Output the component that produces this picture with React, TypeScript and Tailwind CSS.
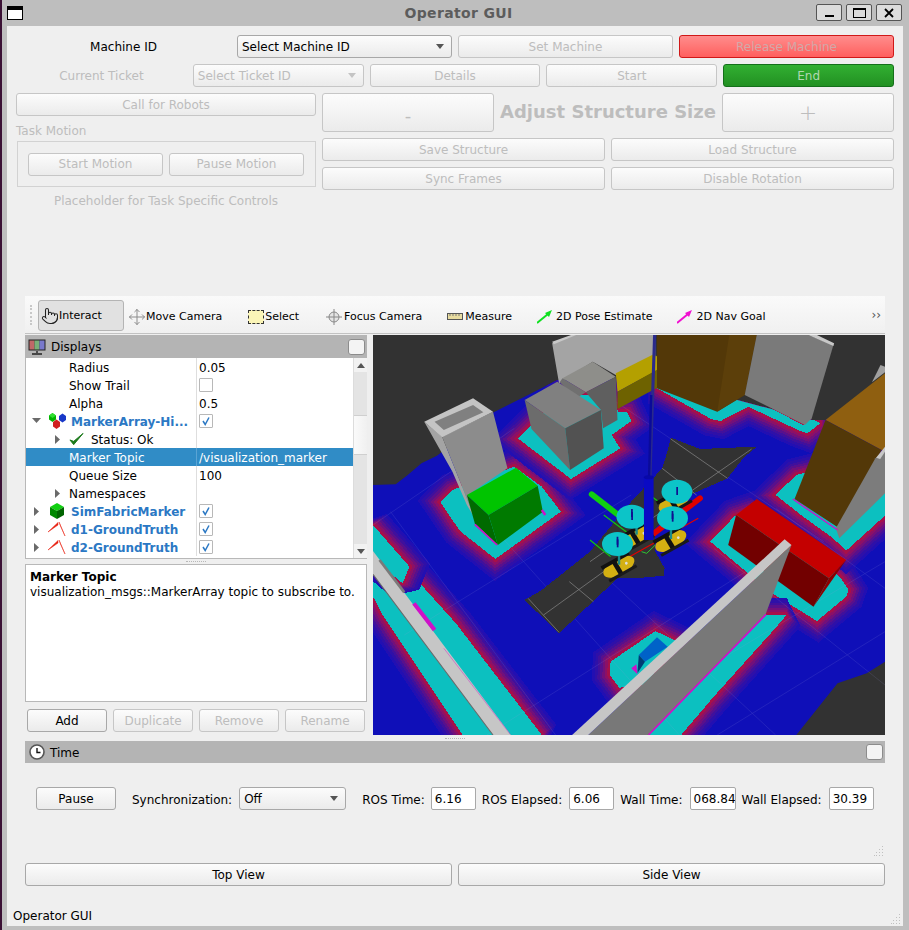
import React from "react";
import { Pointer, Move } from "lucide-react";

function Btn({ children, className = "", on = false }: { children?: React.ReactNode; className?: string; on?: boolean }) {
  return (
    <div className={`h-[23px] flex items-center justify-center rounded-[3px] border bg-gradient-to-b from-[#fcfcfc] to-[#ebebeb] ${on ? "border-[#a8a8a8] text-black" : "border-[#c6c6c6] text-[#bdbdbd]"} ${className}`}>
      {children}
    </div>
  );
}

function Combo({ label, on = false, className = "" }: { label: string; on?: boolean; className?: string }) {
  return (
    <div className={`h-[23px] flex items-center justify-between pl-[4px] pr-[7px] rounded-[3px] border bg-gradient-to-b from-[#fcfcfc] to-[#ebebeb] ${on ? "border-[#a8a8a8] text-black" : "border-[#c6c6c6] text-[#bdbdbd]"} ${className}`}>
      <span>{label}</span>
      <svg width="8" height="5" viewBox="0 0 8 5"><path d="M0 0h8L4 5z" fill={on ? "#555" : "#c4c4c4"} /></svg>
    </div>
  );
}

function Halo({ points, fill = "#0cc0c0" }: { points: string; fill?: string }) {
  const layers: [number, string][] = [
    [104, "#220fb2"],
    [88, "#2e10a8"],
    [72, "#40109c"],
    [58, "#58108c"],
    [44, "#72107a"],
    [30, "#8c1066"],
    [16, "#a6104a"],
  ];
  return (
    <g shapeRendering="crispEdges">
      {layers.map(([w, c]) => (
        <polygon key={w} points={points} fill={c} stroke={c} strokeWidth={w} strokeLinejoin="miter" strokeMiterlimit={1.6} />
      ))}
      <polygon points={points} fill={fill} />
    </g>
  );
}

function Robot({ x, y, disc }: { x: number; y: number; disc: [number, number] }) {
  return (
    <g>
      <g transform={`translate(${x} ${y}) rotate(-30)`}>
        <ellipse cx="0" cy="0" rx="50" ry="25" fill="#d4b012" />
        <rect x="-46" y="-27" width="92" height="11" fill="#111" />
        <rect x="-12" y="-22" width="14" height="46" fill="#111" />
        <rect x="-46" y="19" width="92" height="9" fill="#1a1a1a" />
        <circle cx="24" cy="2" r="4" fill="#ddd" />
      </g>
      <rect x={x - 3} y={y - 40} width="7" height="34" fill="#1a8a8a" />
      <ellipse cx={disc[0]} cy={disc[1]} rx="45" ry="36" fill="#0cc4c8" />
      <rect x={disc[0] - 2} y={disc[1] - 14} width="5" height="24" fill="#101090" />
    </g>
  );
}

function Scene() {
  return (
    <svg width="512" height="400" viewBox="9 120 1489 1200" preserveAspectRatio="none" className="block shrink-0">
      <rect x="9" y="120" width="1489" height="1200" fill="#323232" />
      <clipPath id="floorclip">
        <polygon points="9,570 75,568 110,540 150,505 195,482 360,352 460,300 545,255 835,250 1285,375 1325,375 1498,300 1498,1100 1445,1135 1360,1165 1240,1320 9,1320" />
      </clipPath>
      <g clipPath="url(#floorclip)">
        <rect x="9" y="120" width="1489" height="1200" fill="#0f0fb8" />
        <Halo points="205,622 240,585 420,515 500,575 555,650 365,792 262,708" />
        <Halo points="430,430 465,395 560,300 700,300 722,350 748,350 760,378 703,420 728,460 585,552" />
        <Halo points="835,280 860,265 1010,345 1090,300 1260,390 1285,370 1310,385 1272,415 1245,405 1100,335 1020,378 992,372" />
        <Halo points="990,740 1062,662 1125,640 1300,780 1370,850 1392,885 1385,905 1300,978 1170,895" />
        <Halo points="1180,600 1240,540 1400,500 1498,500 1498,662 1385,767 1345,728 1260,665" />
        <Halo points="9,835 35,880 90,885 150,870 250,985 500,1320 270,1320 40,965 9,905" />
        <Halo points="9,690 115,815 95,865 9,790" />
        <Halo points="700,1100 830,1008 895,1040 800,1170 725,1178 698,1140" />
        <Halo points="1150,960 1212,960 1170,1010 1000,1205 905,1320 810,1320" />
      </g>
      <g fill="none" stroke="#9a9ae0" strokeWidth="1.5" opacity="0.28">
        <path d="M9 690 L420 400 M100 1020 L760 600 M340 1320 L1200 760 M650 1320 L1498 800 M1010 1320 L1498 1010" />
        <path d="M60 650 L540 1320 M360 700 L900 1320 M690 850 L1180 1320 M1000 760 L1498 1170 M1180 640 L1498 880 M700 310 L1320 740" />
      </g>
      <polygon fill="#323232" shapeRendering="crispEdges" points="875,428 960,462 1125,455 1085,490 1040,550 930,600 880,640 830,700 830,770 857,820 855,842 770,850 720,850 550,1015 450,915 500,885 640,770 760,620 850,520 865,470" />
      <g fill="none" stroke="#8a8a8a" strokeWidth="2">
        <path d="M875 432 L1040 550 M1110 462 L640 800 M460 910 L550 1012 M505 960 L720 800 M580 860 L650 920 M850 520 L950 600" />
      </g>

      {/* left tall tower */}
      <polygon fill="#a4a4a4" points="158,380 210,425 305,670 282,630 240,530" />
      <polygon fill="#8c8c8c" points="210,425 358,350 400,520 285,600 305,670" />
      <polygon fill="#c4c4c4" points="158,380 300,310 358,350 210,427" />
      <polygon fill="#808080" points="188,380 300,330 330,352 215,405" />

      {/* top building */}
      <polygon fill="#a4a4a4" points="530,145 590,120 830,120 830,180 715,240 648,200 550,265" />
      <polygon fill="#c8c8c8" points="530,140 585,120 600,120 535,148" />
      {/* yellow */}
      <polygon fill="#b4a000" points="715,235 825,178 860,200 860,212 720,290" />
      <polygon fill="#6e6200" points="720,290 860,210 860,265 720,342" />
      {/* gray boxes */}
      <polygon fill="#8e8e8a" points="560,250 648,200 715,245 628,292" />
      <polygon fill="#5f5f5f" points="628,292 715,245 720,375 678,400 672,345" />
      <polygon fill="#707070" points="560,250 628,292 600,310 552,262" />
      <polygon fill="#808080" points="450,315 545,260 672,345 568,400" />
      <polygon fill="#6c6c6c" points="450,315 568,400 582,525 470,402" />
      <polygon fill="#525252" points="568,400 672,345 680,460 582,525" />

      {/* top right brown + gray */}
      <polygon fill="#533808" points="835,120 1125,120 1090,300 1010,350 835,280" />
      <polygon fill="#5c3f0a" points="1045,120 1125,120 1090,300 1010,350" />
      <polygon fill="#7a7a7a" points="1125,120 1275,120 1348,150 1285,370 1265,390 1090,300" />
      <polygon fill="#c8c8c8" points="1275,120 1300,120 1350,145 1348,153" />

      {/* green box */}
      <polygon fill="#00c400" points="282,600 425,518 488,572 345,660" />
      <polygon fill="#006a00" points="282,600 345,660 372,750 305,685" />
      <polygon fill="#007a00" points="345,660 488,572 503,650 372,750" />
      <path d="M305 688 L370 750" stroke="#d010c8" strokeWidth="5" />
      <path d="M500 645 L510 660" stroke="#d010c8" strokeWidth="7" />

      {/* right brown */}
      <polygon fill="#8f5f10" points="1325,375 1498,235 1498,470 1488,465" />
      <polygon fill="#533808" points="1325,375 1488,465 1365,700 1235,612" />
      <polygon fill="#7c7c7c" points="1470,490 1498,470 1498,595 1365,730 1355,700" />
      <polygon fill="#c8c8c8" points="1472,488 1498,455 1498,470 1484,492" />
      <polygon fill="#a0a0a0" points="1460,262 1485,210 1498,215 1498,232" />
      <path d="M1230 612 L1360 705" stroke="#d010c8" strokeWidth="4" />

      {/* red box */}
      <polygon fill="#c40000" points="1065,660 1125,612 1385,795 1335,850" />
      <polygon fill="#720000" points="1065,660 1335,850 1290,935 1042,750" />
      <polygon fill="#8c0000" points="1335,850 1385,795 1290,935" />

      {/* robots and axes */}
      <path d="M828 120 L814 560" stroke="#2a2a8c" strokeWidth="9" />
      <path d="M818 300 L812 545" stroke="#0a0a9a" strokeWidth="7" />
      <path d="M645 598 L725 662" stroke="#10d010" strokeWidth="17" strokeLinecap="round" />
      <path d="M680 660 L790 745 M640 735 L700 785 M820 605 L860 635" stroke="#10c810" strokeWidth="3.5" />
      <path d="M790 770 L805 775 L830 750" stroke="#30e030" strokeWidth="2.5" fill="none" />
      <path d="M960 610 L820 720" stroke="#e00000" strokeWidth="17" strokeLinecap="round" />
      <path d="M955 670 L755 785" stroke="#e00000" strokeWidth="3.5" />
      <Robot x={885} y={620} disc={[893, 590]} />
      <Robot x={775} y={725} disc={[762, 665]} />
      <Robot x={875} y={738} disc={[880, 670]} />
      <Robot x={724} y={815} disc={[720, 747]} />
      <rect x="797" y="545" width="28" height="190" fill="#0a0ac4" />
      <ellipse cx="811" cy="547" rx="14" ry="6" fill="#0808a8" />
      <path d="M762 642 v24 M880 648 v24 M720 725 v24" stroke="#101090" strokeWidth="5" />

      {/* blue box */}
      <polygon fill="#0062c8" points="782,1080 835,1027 866,1055 800,1100" />
      <polygon fill="#003c74" points="782,1080 800,1100 778,1135" />
      <polygon fill="#d010c8" points="760,1120 775,1108 778,1138" />

      {/* front wall */}
      <polygon fill="#787878" points="635,1320 1226,750 1150,960 810,1320" />
      <polygon fill="#c6c6c6" points="588,1320 1206,733 1226,750 635,1320" />
      <path d="M810 1320 L1152 958" stroke="#d010c8" strokeWidth="5" />

      {/* left wall */}
      <polygon fill="#c6c6c6" points="9,768 410,1320 358,1320 9,838" />
      <path d="M9 838 L358 1320" stroke="#6a6a6a" strokeWidth="3" />
      <path d="M28 795 L100 892" stroke="#7a7a7a" strokeWidth="8" />
      <path d="M128 925 L188 1005" stroke="#d010c8" strokeWidth="12" />
      <path d="M215 1060 L408 1318" stroke="#d010c8" strokeWidth="2" opacity="0.6" />
    </svg>
  );
}

function Arrow({ open }: { open: boolean }) {
  return open ? (
    <svg width="9" height="6" viewBox="0 0 9 6"><path d="M0 0h9L4.5 5z" fill="#6a6a6a" /></svg>
  ) : (
    <svg width="5" height="9" viewBox="0 0 5 9"><path d="M0 0v9l5-4.5z" fill="#6a6a6a" /></svg>
  );
}

function Value({ value, check, sel }: { value?: string; check?: "on" | "off"; sel?: boolean }) {
  return (
    <>
      <div className={`w-px h-full shrink-0 ${sel ? "bg-[#5aa4d4]" : "bg-[#dedede]"}`} />
      <div className="pl-[2px] flex items-center whitespace-nowrap">
        {value && <span className="pt-[2px]">{value}</span>}
        {check && (
          <div className="w-[14px] h-[14px] border border-[#b8b8b8] bg-white rounded-[1px] flex items-center justify-center">
            {check === "on" && (
              <svg width="10" height="10" viewBox="0 0 10 10"><path d="M2 5 L4.2 8.5 L8 1.5" fill="none" stroke="#2b78c4" strokeWidth="1.5" /></svg>
            )}
          </div>
        )}
      </div>
    </>
  );
}

function TopRow({ exp, icon, label, check }: { exp: boolean; icon: React.ReactNode; label: string; check: "on" | "off" }) {
  return (
    <div className="h-[18px] flex items-center">
      <div className="w-[170px] h-full flex items-center shrink-0">
        <div className="w-[20px] flex justify-center shrink-0"><Arrow open={exp} /></div>
        <div className="w-[22px] flex justify-center shrink-0 mr-[3px]">{icon}</div>
        <span className="font-bold text-[#2b78c4] whitespace-nowrap pt-[2px]">{label}</span>
      </div>
      <Value check={check} />
    </div>
  );
}

function SubRow({ label, arrow = false, icon, value, check, sel = false }: { label: string; arrow?: boolean; icon?: React.ReactNode; value?: string; check?: "on" | "off"; sel?: boolean }) {
  return (
    <div className={`h-[18px] flex items-center ${sel ? "bg-[#308cc6] text-white" : ""}`}>
      <div className="w-[170px] h-full flex items-center shrink-0">
        <div className="w-[20px] shrink-0" />
        <div className="w-[23px] flex justify-center shrink-0">{arrow && <Arrow open={false} />}</div>
        {icon && <div className="w-[22px] shrink-0 flex items-center">{icon}</div>}
        <span className="whitespace-nowrap pt-[2px]">{label}</span>
      </div>
      <Value value={value} check={check} sel={sel} />
    </div>
  );
}

const Cubes = () => (
  <svg width="20" height="18" viewBox="0 0 20 18">
    <path d="M2 3.5l3.5-2.5 3.5 2.5v4l-3.5 2.5-3.5-2.5z" fill="#00b400" />
    <path d="M2 3.5l3.5-2.5 3.5 2.5-3.5 2.5z" fill="#30e030" />
    <path d="M12 4l3.5-2.5 3.5 2.5v4l-3.5 2.5-3.5-2.5z" fill="#1838c8" />
    <path d="M6 10l3.5-2.5 3.5 2.5v4.5l-3.5 2.5-3.5-2.5z" fill="#d02020" />
  </svg>
);
const GreenCube = () => (
  <svg width="16" height="16" viewBox="0 0 16 16">
    <path d="M1 4l7-4 7 4-7 4z" fill="#10d010" />
    <path d="M1 4l7 4v8l-7-4z" fill="#008800" />
    <path d="M15 4l-7 4v8l7-4z" fill="#006400" />
  </svg>
);
const RobotIcon = () => (
  <svg width="18" height="16" viewBox="0 0 18 16">
    <path d="M0 11 L10 1.5 L10 4z" fill="#e82010" stroke="#e82010" strokeWidth="0.5" />
    <path d="M11 1 L17 15 L12.5 5z" fill="#e82010" stroke="#e82010" strokeWidth="0.5" />
  </svg>
);
const Check = () => (
  <svg width="15" height="14" viewBox="0 0 16 14"><path d="M1 8 L5 13 L15 1 L5 9.5z" fill="#1c7a1c" stroke="#1c7a1c" strokeWidth="1" /></svg>
);

function ToolItem({ icon, label, className = "" }: { icon: React.ReactNode; label: string; className?: string }) {
  return (
    <div className={`flex items-center shrink-0 pt-[4px] ${className}`}>
      {icon}
      <span className="pt-[1px]">{label}</span>
    </div>
  );
}

function Dots({ className = "" }: { className?: string }) {
  return (
    <svg width="10" height="10" viewBox="0 0 10 10" className={className}>
      <g fill="#c0c0c0">
        <rect x="8" y="0" width="1" height="1" /><rect x="5" y="3" width="1" height="1" /><rect x="8" y="3" width="1" height="1" />
        <rect x="2" y="6" width="1" height="1" /><rect x="5" y="6" width="1" height="1" /><rect x="8" y="6" width="1" height="1" />
        <rect x="0" y="9" width="1" height="1" /><rect x="2" y="9" width="1" height="1" /><rect x="5" y="9" width="1" height="1" /><rect x="8" y="9" width="1" height="1" />
      </g>
    </svg>
  );
}

function NumBox({ v, className = "" }: { v: string; className?: string }) {
  return (
    <div className={`h-[23px] w-[45px] bg-white border border-[#a8a8a8] rounded-[2px] flex items-center pl-[3px] overflow-hidden whitespace-nowrap ${className}`}>{v}</div>
  );
}

export default function App() {
  return (
    <div className="w-[909px] h-[930px] bg-[#bebebe] flex flex-col overflow-hidden text-[12px] border-l-[2px] border-[#3a1034] font-['DejaVu_Sans',sans-serif] text-black">
      {/* title bar */}
      <div className="h-[26px] flex items-center shrink-0">
        <div className="w-[16px] h-[14px] ml-[5px] bg-white border-[1px] border-black border-t-[4px]" />
        <div className="flex-1 text-center font-bold text-[14px] tracking-[0.35px] text-[#5c5c5c] pl-[78px]">Operator GUI</div>
        <div className="flex gap-[4px] mr-[7px] mt-[-1px]">
          <div className="w-[26px] h-[17px] border-[1px] border-[#555] rounded-[2px] bg-[#dcdcdc] flex items-end justify-center pb-[3px]"><div className="w-[9px] h-[2px] bg-black" /></div>
          <div className="w-[26px] h-[17px] border-[1px] border-[#555] rounded-[2px] bg-[#dcdcdc] flex items-center justify-center"><div className="w-[13px] h-[10px] border border-black border-t-[2px]" /></div>
          <div className="w-[26px] h-[17px] border-[1px] border-[#555] rounded-[2px] bg-[#dcdcdc] flex items-center justify-center">
            <svg width="10" height="10" viewBox="0 0 10 10"><path d="M1 1l8 8M9 1l-8 8" stroke="#000" strokeWidth="1.8" /></svg>
          </div>
        </div>
      </div>

      {/* window body */}
      <div className="ml-[5px] w-[896px] h-[900px] bg-[#efefef] flex flex-col shrink-0">
        <div className="h-[270px] shrink-0 px-[9px] pt-[9px] flex flex-col gap-[6px]">
          <div className="grid grid-cols-4 gap-[6px]">
            <div className="h-[23px] flex items-center justify-center">Machine ID</div>
            <Combo label="Select Machine ID" on />
            <Btn>Set Machine</Btn>
            <div className="h-[23px] flex items-center justify-center rounded-[3px] border border-[#d01818] bg-gradient-to-b from-[#ff8c8c] to-[#ff5e5e] text-[#d2a8a8]">Release Machine</div>
          </div>
          <div className="grid grid-cols-5 gap-[6px]">
            <div className="h-[23px] flex items-center justify-center text-[#bdbdbd]">Current Ticket</div>
            <Combo label="Select Ticket ID" />
            <Btn>Details</Btn>
            <Btn>Start</Btn>
            <div className="h-[23px] flex items-center justify-center rounded-[3px] border border-[#14701a] bg-gradient-to-b from-[#32b032] to-[#229022] text-[#b0d8b0]">End</div>
          </div>
          <div className="flex gap-[6px]">
            <div className="w-[300px] flex flex-col shrink-0">
              <Btn>Call for Robots</Btn>
              <div className="h-[25px] flex items-end pb-[1px] text-[#bdbdbd]">Task Motion</div>
              <div className="ml-[1px] h-[46px] border border-[#d2d2d2] flex items-center gap-[6px] pl-[10px]">
                <Btn className="w-[135px]">Start Motion</Btn>
                <Btn className="w-[135px]">Pause Motion</Btn>
              </div>
              <div className="h-[28px] flex items-center justify-center text-[#bdbdbd]">Placeholder for Task Specific Controls</div>
            </div>
            <div className="flex-1 flex flex-col gap-[6px]">
              <div className="flex gap-[6px] h-[39px]">
                <Btn className="!h-[39px] w-[172px] text-[18px] pt-[6px]">-</Btn>
                <div className="w-[216px] flex items-center justify-center font-bold text-[#bdbdbd] text-[18px] whitespace-nowrap pb-[2px]">Adjust Structure Size</div>
                <Btn className="!h-[39px] w-[172px] text-[22px] font-light">+</Btn>
              </div>
              <div className="grid grid-cols-2 gap-[6px]">
                <Btn>Save Structure</Btn>
                <Btn>Load Structure</Btn>
              </div>
              <div className="grid grid-cols-2 gap-[6px]">
                <Btn>Sync Frames</Btn>
                <Btn>Disable Rotation</Btn>
              </div>
            </div>
          </div>
        </div>

        {/* toolbar */}
        <div className="ml-[18px] w-[860px] h-[38px] shrink-0 bg-gradient-to-b from-[#fafafa] to-[#f0f0f0] border-b-[1px] border-[#c2c2c2] flex items-center text-[11px]">
          <div className="w-[3px] h-[20px] ml-[5px] mr-[5px] border-l-[2px] border-dotted border-[#c8c8c8]" />
          <div className="w-[86px] h-[31px] mt-[2px] bg-[#e1e1e1] border border-[#b4b4b4] rounded-[3px] flex items-center pl-[2px] shrink-0">
            <Pointer size={18} strokeWidth={1.4} color="#222" />
            <span className="pt-[2px]">Interact</span>
          </div>
          <ToolItem className="ml-[4px]" icon={<Move size={18} strokeWidth={1.3} color="#8a8a8a" />} label="Move Camera" />
          <ToolItem className="ml-[26px]" icon={
            <div className="w-[16px] h-[14px] bg-[#fbf5b8] border border-dashed border-[#333] mr-[1px]" />
          } label="Select" />
          <ToolItem className="ml-[26px]" icon={
            <svg width="18" height="18" viewBox="0 0 18 18" className="mr-px"><circle cx="9" cy="9" r="5" fill="#e4e4e4" stroke="#888" /><path d="M9 1v16M1 9h16" stroke="#888" /></svg>
          } label="Focus Camera" />
          <ToolItem className="ml-[25px]" icon={
            <svg width="16" height="7" viewBox="0 0 16 7" className="mr-[2px]"><rect x="0.5" y="0.5" width="15" height="6" fill="#e8dca0" stroke="#555" /><path d="M3 1v2M6 1v2M9 1v2M12 1v2" stroke="#777" /></svg>
          } label="Measure" />
          <ToolItem className="ml-[25px]" icon={
            <svg width="16" height="14" viewBox="0 0 16 14" className="mr-[3px]"><path d="M0 13 L11 4" stroke="#10e020" strokeWidth="2" /><path d="M8 3 L15 0 L12 7z" fill="#10e020" /></svg>
          } label="2D Pose Estimate" />
          <ToolItem className="ml-[25px]" icon={
            <svg width="16" height="14" viewBox="0 0 16 14" className="mr-[3px]"><path d="M0 13 L11 4" stroke="#f010d0" strokeWidth="2" /><path d="M8 3 L15 0 L12 7z" fill="#f010d0" /></svg>
          } label="2D Nav Goal" />
          <div className="ml-auto mr-[4px] text-[#555] text-[12px]">››</div>
        </div>

        <div className="h-px shrink-0" />

        {/* main */}
        <div className="ml-[18px] w-[860px] h-[400px] flex gap-[6px] shrink-0">
          <div className="w-[342px] flex flex-col shrink-0">
            <div className="h-[23px] bg-[#b4b4b4] flex items-center pl-[3px] pr-[2px] shrink-0">
              <svg width="18" height="16" viewBox="0 0 18 16" className="mr-[5px]">
                <rect x="0.5" y="0.5" width="17" height="11" fill="#222" />
                <rect x="1.5" y="1.5" width="5" height="9" fill="#c06868" /><rect x="6.5" y="1.5" width="5" height="9" fill="#78b078" /><rect x="11.5" y="1.5" width="5" height="9" fill="#7878cc" />
                <path d="M9 12v2M4 15h10" stroke="#222" strokeWidth="1.4" />
              </svg>
              <span>Displays</span>
              <div className="ml-auto w-[17px] h-[16px] bg-[#f4f4f4] border border-[#8c8c8c] rounded-[3px]" />
            </div>
            <div className="h-[201px] flex bg-white border-l border-b border-[#b8b8b8] shrink-0 overflow-hidden">
              <div className="w-[327px] shrink-0 overflow-hidden">
                <SubRow label="Radius" value="0.05" />
                <SubRow label="Show Trail" check="off" />
                <SubRow label="Alpha" value="0.5" />
                <TopRow exp icon={<Cubes />} label="MarkerArray-Hi..." check="on" />
                <SubRow label="Status: Ok" arrow icon={<Check />} />
                <SubRow label="Marker Topic" value="/visualization_marker" sel />
                <SubRow label="Queue Size" value="100" />
                <SubRow label="Namespaces" arrow />
                <TopRow exp={false} icon={<GreenCube />} label="SimFabricMarker" check="on" />
                <TopRow exp={false} icon={<RobotIcon />} label="d1-GroundTruth" check="on" />
                <TopRow exp={false} icon={<RobotIcon />} label="d2-GroundTruth" check="on" />
              </div>
              <div className="w-[14px] bg-[#e4e4e4] flex flex-col items-stretch shrink-0 border-l border-[#dcdcdc]">
                <div className="h-[14px] bg-[#f2f2f2] flex items-center justify-center shrink-0">
                  <svg width="8" height="5" viewBox="0 0 8 5"><path d="M0 5h8L4 0z" fill="#555" /></svg>
                </div>
                <div className="h-[43px] shrink-0" />
                <div className="h-[40px] bg-gradient-to-r from-[#fafafa] to-[#f0f0f0] border-y border-[#cfcfcf] shrink-0" />
                <div className="flex-1" />
                <div className="h-[14px] bg-[#f2f2f2] flex items-center justify-center shrink-0">
                  <svg width="8" height="5" viewBox="0 0 8 5"><path d="M0 0h8L4 5z" fill="#555" /></svg>
                </div>
              </div>
            </div>
            <div className="h-[5px] shrink-0 flex items-center justify-center">
              <div className="w-[20px] h-px border-t border-dotted border-[#b8b8b8]" />
            </div>
            <div className="h-[138px] bg-white border border-[#b8b8b8] px-[4px] pt-[5px] shrink-0 leading-[15px]">
              <div className="font-bold">Marker Topic</div>
              <div className="whitespace-nowrap">visualization_msgs::MarkerArray topic to subscribe to.</div>
            </div>
            <div className="flex gap-[6px] pl-[2px] pr-[2px] mt-[7px]">
              <Btn on className="w-[80px]">Add</Btn>
              <Btn className="w-[80px]">Duplicate</Btn>
              <Btn className="w-[80px]">Remove</Btn>
              <Btn className="w-[80px]">Rename</Btn>
            </div>
          </div>
          <Scene />
        </div>

        <div className="h-[6px] shrink-0 flex items-center justify-center ml-[18px] w-[860px]">
          <div className="w-[20px] h-px border-t border-dotted border-[#b8b8b8]" />
        </div>

        {/* Time panel */}
        <div className="ml-[18px] w-[860px] h-[22px] bg-[#b4b4b4] flex items-center pl-[4px] pr-[2px] shrink-0">
          <svg width="16" height="16" viewBox="0 0 16 16" className="mr-[5px]">
            <circle cx="8" cy="8" r="7" fill="#fff" stroke="#555" strokeWidth="1.6" />
            <path d="M8 4v4.5h3.5" fill="none" stroke="#111" strokeWidth="1.4" />
          </svg>
          <span className="pt-[2px]">Time</span>
          <div className="ml-auto w-[17px] h-[16px] bg-[#f4f4f4] border border-[#8c8c8c] rounded-[3px]" />
        </div>

        <div className="h-[24px] shrink-0" />
        <div className="ml-[29px] h-[23px] flex items-center shrink-0 whitespace-nowrap">
          <Btn on className="w-[80px]">Pause</Btn>
          <span className="ml-[16px] pt-[2px]">Synchronization:</span>
          <Combo on label="Off" className="w-[107px] ml-[7px]" />
          <div className="ml-[16px] flex items-center gap-[6px]">
            <span className="pt-[2px]">ROS Time:</span>
            <NumBox v="6.16" />
            <span className="pt-[2px]">ROS Elapsed:</span>
            <NumBox v="6.06" className="ml-[1px]" />
            <span className="pt-[2px]">Wall Time:</span>
            <NumBox v="068.84" className="!w-[46px] ml-[1px]" />
            <span className="pt-[2px]">Wall Elapsed:</span>
            <NumBox v="30.39" className="ml-[1px]" />
          </div>
        </div>

        <div className="h-[36px] shrink-0" />
        <div className="h-[10px] shrink-0 flex justify-end pr-[19px]"><Dots /></div>
        <div className="h-[7px] shrink-0" />

        <div className="ml-[18px] w-[860px] flex gap-[6px] shrink-0">
          <Btn on className="flex-1">Top View</Btn>
          <Btn on className="flex-1">Side View</Btn>
        </div>

        <div className="h-[22px] shrink-0" />
        <div className="h-[18px] shrink-0 flex justify-between pl-[6px] pr-[2px] leading-[15px] pt-[1px]">
          <span>Operator GUI</span>
          <Dots className="mt-[5px]" />
        </div>
      </div>
    </div>
  );
}
